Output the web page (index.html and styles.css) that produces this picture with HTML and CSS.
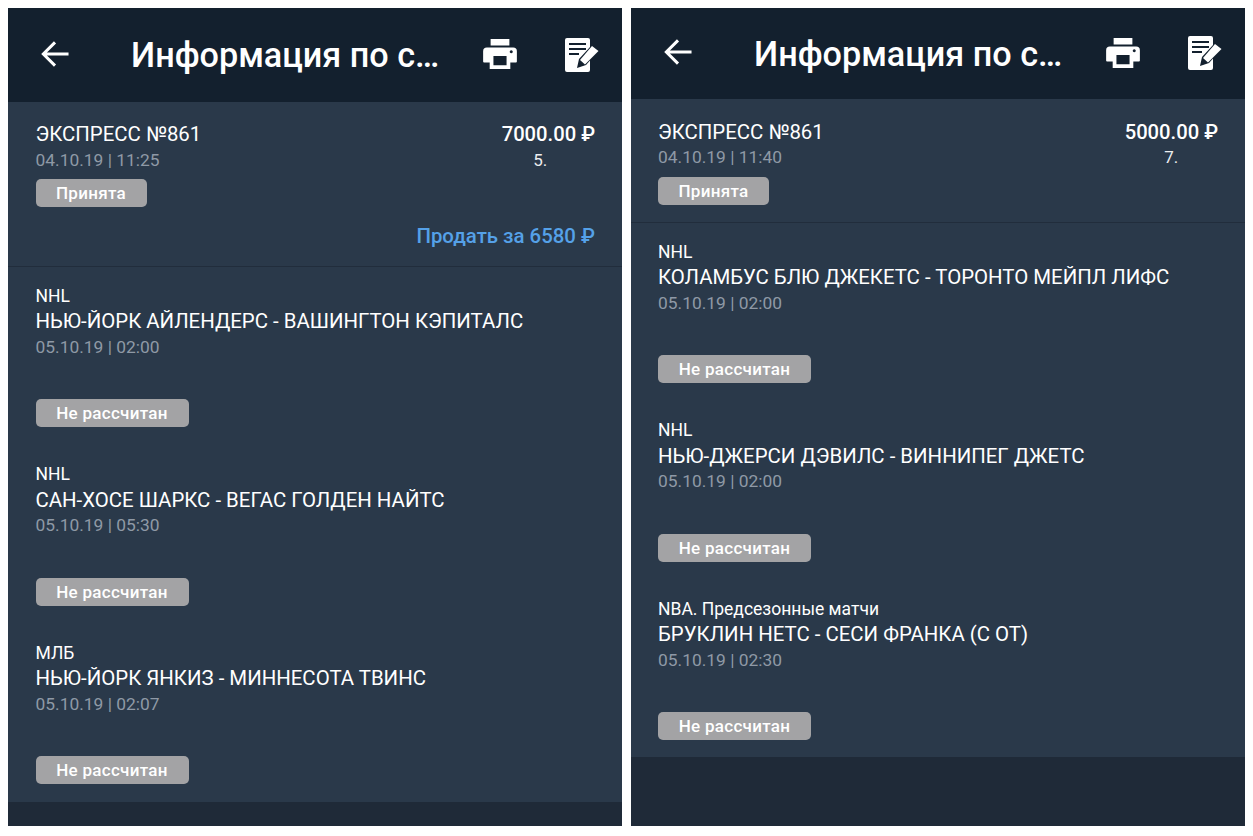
FILE: index.html
```html
<!DOCTYPE html>
<html lang="ru">
<head>
<meta charset="utf-8">
<title>Информация по ставке</title>
<link rel="stylesheet" href="styles.css">
</head>
<body>
<svg class="defs" width="0" height="0" aria-hidden="true">
  <defs>
    <symbol id="i-back" viewBox="0 0 30 30"><path d="M29.500 15H3M15 2.500 2.500 15 15 27.500" fill="none" stroke="#fff" stroke-width="3.200"/></symbol>
    <symbol id="i-print" viewBox="0 0 36 32"><path fill="#fff" fill-rule="evenodd" d="M8 0h20v7H8zM4 9h28a4 4 0 0 1 4 4v11a1 1 0 0 1-1 1h-6v7H7v-7H1a1 1 0 0 1-1-1V13a4 4 0 0 1 4-4zM11 18v10h14V18zM30 12a1.600 1.600 0 1 0 .01 0z"/></symbol>
    <symbol id="i-note" viewBox="0 0 34 34"><path fill="#fff" d="M2 0h21a2 2 0 0 1 2 2v7L14 21l-2 9 9-3 4-4.500V32a2 2 0 0 1-2 2H2a2 2 0 0 1-2-2V2a2 2 0 0 1 2-2z"/><path fill="#fff" d="M27 8l6.500 5L20 26.500l-5-4.500z"/><path stroke="#13202e" stroke-width="2" d="M4 6h17M4 11h17M4 16h10"/></symbol>
  </defs>
</svg>
<main class="screens">
  <section class="phone phone-left">
    <header class="topbar">
      <svg class="ic-back"><use href="#i-back"/></svg>
      <h1 class="title">Информация по с…</h1>
      <svg class="ic-print"><use href="#i-print"/></svg>
      <svg class="ic-note"><use href="#i-note"/></svg>
    </header>
    <div class="summary">
      <div class="sum-row">
        <div>
          <div class="sum-name">ЭКСПРЕСС №861</div>
          <div class="date">04.10.19 | 11:25</div>
        </div>
        <div class="sum-amount">
          <div class="amount">7000.00 ₽</div>
          <div class="coef">5.</div>
        </div>
      </div>
      <span class="badge badge-first">Принята</span>
      <div class="sell">Продать за 6580 ₽</div>
    </div>
    <div class="matches">
      <article class="match">
        <div class="league">NHL</div>
        <div class="teams">НЬЮ-ЙОРК АЙЛЕНДЕРС - ВАШИНГТОН КЭПИТАЛС</div>
        <div class="date">05.10.19 | 02:00</div>
        <span class="badge">Не рассчитан</span>
      </article>
      <article class="match">
        <div class="league">NHL</div>
        <div class="teams">САН-ХОСЕ ШАРКС - ВЕГАС ГОЛДЕН НАЙТС</div>
        <div class="date">05.10.19 | 05:30</div>
        <span class="badge">Не рассчитан</span>
      </article>
      <article class="match">
        <div class="league">МЛБ</div>
        <div class="teams">НЬЮ-ЙОРК ЯНКИЗ - МИННЕСОТА ТВИНС</div>
        <div class="date">05.10.19 | 02:07</div>
        <span class="badge">Не рассчитан</span>
      </article>
    </div>
    <div class="rest"></div>
  </section>
  <section class="phone phone-right">
    <header class="topbar">
      <svg class="ic-back"><use href="#i-back"/></svg>
      <h1 class="title">Информация по с…</h1>
      <svg class="ic-print"><use href="#i-print"/></svg>
      <svg class="ic-note"><use href="#i-note"/></svg>
    </header>
    <div class="summary">
      <div class="sum-row">
        <div>
          <div class="sum-name">ЭКСПРЕСС №861</div>
          <div class="date">04.10.19 | 11:40</div>
        </div>
        <div class="sum-amount">
          <div class="amount">5000.00 ₽</div>
          <div class="coef">7.</div>
        </div>
      </div>
      <span class="badge badge-first">Принята</span>
    </div>
    <div class="matches">
      <article class="match">
        <div class="league">NHL</div>
        <div class="teams">КОЛАМБУС БЛЮ ДЖЕКЕТС - ТОРОНТО МЕЙПЛ ЛИФС</div>
        <div class="date">05.10.19 | 02:00</div>
        <span class="badge">Не рассчитан</span>
      </article>
      <article class="match">
        <div class="league">NHL</div>
        <div class="teams">НЬЮ-ДЖЕРСИ ДЭВИЛС - ВИННИПЕГ ДЖЕТС</div>
        <div class="date">05.10.19 | 02:00</div>
        <span class="badge">Не рассчитан</span>
      </article>
      <article class="match">
        <div class="league">NBA. Предсезонные матчи</div>
        <div class="teams">БРУКЛИН НЕТС - СЕСИ ФРАНКА (С ОТ)</div>
        <div class="date">05.10.19 | 02:30</div>
        <span class="badge">Не рассчитан</span>
      </article>
    </div>
    <div class="rest"></div>
  </section>
</main>
</body>
</html>
```

FILE: styles.css
```css
* { box-sizing: border-box; }
html, body { margin: 0; height: 100%; background: #fff; }
body { padding: 8px; font-family: Roboto, "Liberation Sans", sans-serif; color: #fff; overflow: hidden; }
.defs { position: absolute; }
.screens { display: flex; gap: 9px; height: 818px; }
.phone { width: 614px; display: flex; flex-direction: column; background: #1f2a38; }
.topbar { display: flex; align-items: center; background: #13202e; padding-left: 33px; flex: none; }
.phone-left .topbar { height: 94px; }
.phone-right .topbar { height: 91px; }
.ic-back { width: 28px; height: 28px; flex: none; margin-top: -3px; }
.title { margin: 0 0 0 62px; width: 308px; flex: none; font-size: 34.200px; font-weight: 500; line-height: 40px; white-space: nowrap; }
.ic-print { width: 34px; height: 30px; flex: none; margin: -2px 0 0 44px; }
.ic-note { width: 34px; height: 34px; flex: none; margin: -1px 0 0 48px; }
.summary { background: #2a394a; padding: 20px 27px 0 27.500px; border-bottom: 1px solid #212d3c; flex: none; }
.phone-left .summary { height: 165px; }
.phone-right .summary { height: 124px; padding-top: 20.500px; padding-left: 27px; }
.sum-row { display: flex; justify-content: space-between; }
.sum-name { font-size: 20.400px; line-height: 25.500px; }
.date { font-size: 17.400px; line-height: 24px; color: #8f99a6; }
.sum-amount { text-align: center; }
.amount { font-size: 20.200px; font-weight: 500; line-height: 25.500px; }
.coef { font-size: 17px; line-height: 24px; color: #eceef0; }
.phone-left .coef { padding-right: 16px; }
.badge { display: flex; align-items: center; justify-content: center; width: 153px; height: 28px; border-radius: 5px; background: #a3a3a5; font-size: 17px; font-weight: 500; letter-spacing: .3px; color: #fff; }
.badge-first { width: 111px; margin-top: 7.500px; }
.sell { margin-top: 16px; text-align: right; font-size: 20.400px; font-weight: 500; line-height: 26px; color: #55a1e8; }
.matches { background: #2a394a; padding-top: 18.750px; flex: none; }
.match { height: 178.500px; padding-left: 27.500px; }
.phone-right .match { padding-left: 27px; }
.phone-left .matches { height: 535px; }
.phone-right .matches { height: 534px; }
.league { font-size: 17.500px; line-height: 21.500px; }
.teams { font-size: 20.400px; line-height: 29.500px; white-space: nowrap; }
.match .date { line-height: 21.500px; }
.match .badge { margin-top: 41px; }
.rest { flex: 1; background: #1f2a38; }
```
